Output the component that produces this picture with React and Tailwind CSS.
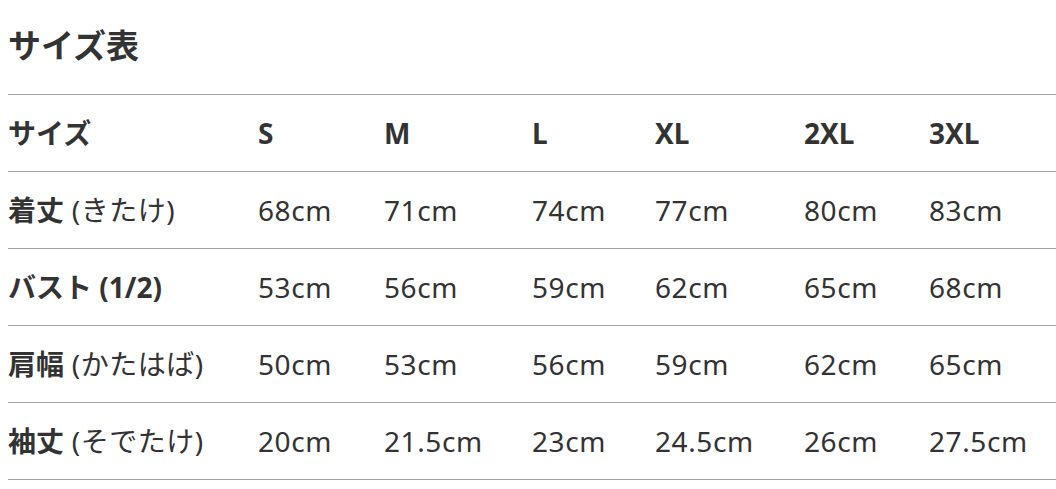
import React from 'react';

const sizes = ['S', 'M', 'L', 'XL', '2XL', '3XL'];

const rows = [
    { label: '着丈', reading: '(きたけ)', values: ['68cm', '71cm', '74cm', '77cm', '80cm', '83cm'] },
    { label: 'バスト (1/2)', reading: null, values: ['53cm', '56cm', '59cm', '62cm', '65cm', '68cm'] },
    { label: '肩幅', reading: '(かたはば)', values: ['50cm', '53cm', '56cm', '59cm', '62cm', '65cm'] },
    { label: '袖丈', reading: '(そでたけ)', values: ['20cm', '21.5cm', '23cm', '24.5cm', '26cm', '27.5cm'] },
];

const cols = 'grid grid-cols-[250px_126px_148px_123px_149px_125px_1fr] h-[77px] items-center border-b border-[#a3a3a3]';

const App = () => {
    return (
        <div className="w-[1056px] h-[489px] bg-white pl-2 text-[#333] font-['Noto_Sans','Noto_Sans_CJK_JP',sans-serif] overflow-hidden">
            <div className="h-[94px] flex items-center pb-[4px]">
                <h1 className="text-[33px] font-bold leading-none">サイズ表</h1>
            </div>
            <div className="border-t border-[#a3a3a3]">
                <div className={cols}>
                    <span className="text-[28px] font-bold">サイズ</span>
                    {sizes.map((s) => (
                        <span key={s} className="text-[28px] font-bold">{s}</span>
                    ))}
                </div>
                {rows.map((row) => (
                    <div className={cols} key={row.label}>
                        <span className="text-[28px] whitespace-nowrap">
                            <span className="font-bold">{row.label}</span>
                            {row.reading && <span className="tracking-[0.5px]"> {row.reading}</span>}
                        </span>
                        {row.values.map((v, i) => (
                            <span key={i} className="text-[28px] tracking-[0.6px]">{v}</span>
                        ))}
                    </div>
                ))}
            </div>
        </div>
    );
};

export default App;
